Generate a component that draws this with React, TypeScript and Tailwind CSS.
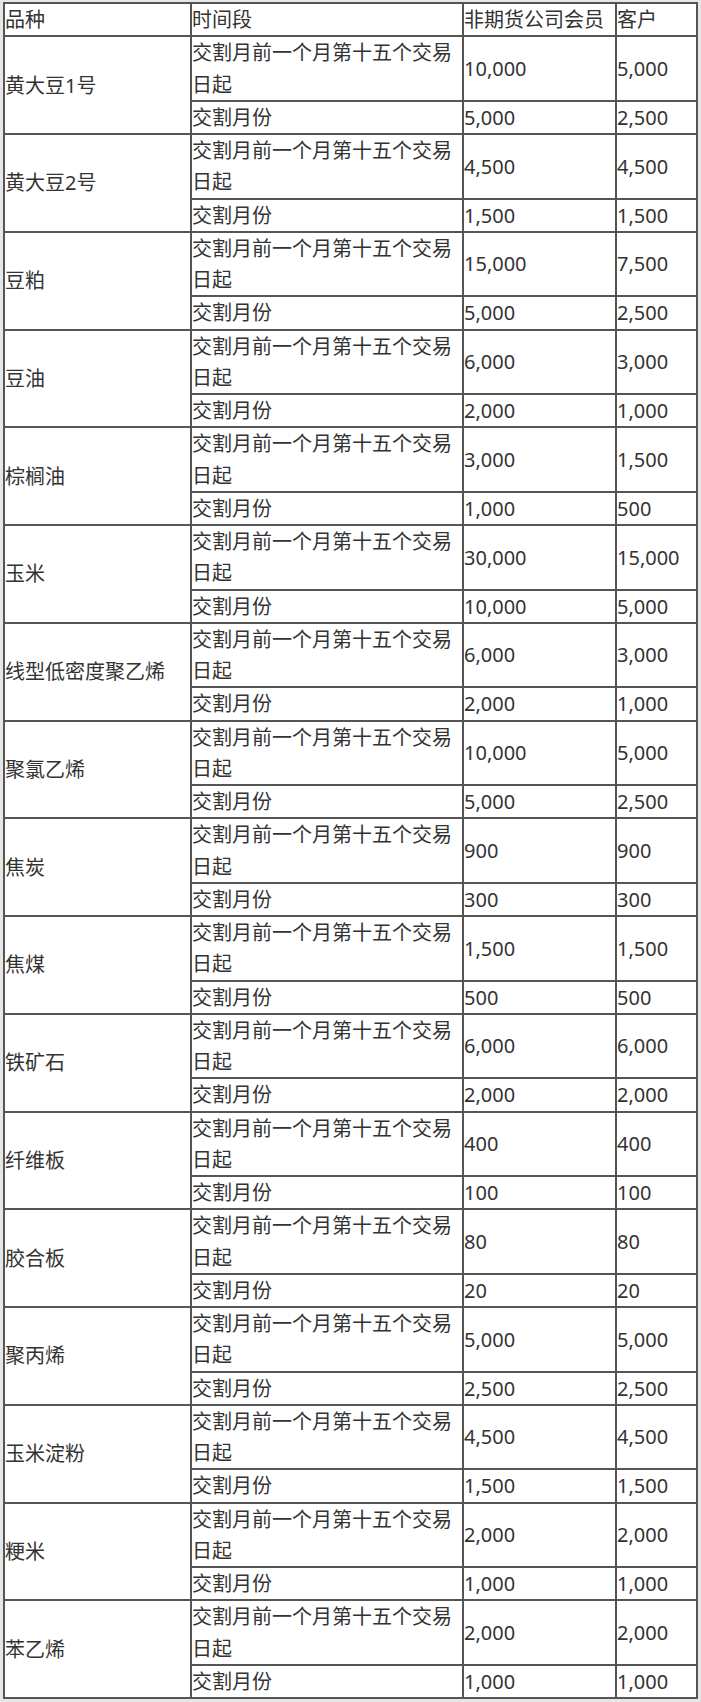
import React from "react";

interface Row {
  name: string;
  before: [string, string];
  month: [string, string];
}

const rows: Row[] = [
  { name: "黄大豆1号", before: ["10,000", "5,000"], month: ["5,000", "2,500"] },
  { name: "黄大豆2号", before: ["4,500", "4,500"], month: ["1,500", "1,500"] },
  { name: "豆粕", before: ["15,000", "7,500"], month: ["5,000", "2,500"] },
  { name: "豆油", before: ["6,000", "3,000"], month: ["2,000", "1,000"] },
  { name: "棕榈油", before: ["3,000", "1,500"], month: ["1,000", "500"] },
  { name: "玉米", before: ["30,000", "15,000"], month: ["10,000", "5,000"] },
  { name: "线型低密度聚乙烯", before: ["6,000", "3,000"], month: ["2,000", "1,000"] },
  { name: "聚氯乙烯", before: ["10,000", "5,000"], month: ["5,000", "2,500"] },
  { name: "焦炭", before: ["900", "900"], month: ["300", "300"] },
  { name: "焦煤", before: ["1,500", "1,500"], month: ["500", "500"] },
  { name: "铁矿石", before: ["6,000", "6,000"], month: ["2,000", "2,000"] },
  { name: "纤维板", before: ["400", "400"], month: ["100", "100"] },
  { name: "胶合板", before: ["80", "80"], month: ["20", "20"] },
  { name: "聚丙烯", before: ["5,000", "5,000"], month: ["2,500", "2,500"] },
  { name: "玉米淀粉", before: ["4,500", "4,500"], month: ["1,500", "1,500"] },
  { name: "粳米", before: ["2,000", "2,000"], month: ["1,000", "1,000"] },
  { name: "苯乙烯", before: ["2,000", "2,000"], month: ["1,000", "1,000"] },
];

const cell = "border border-[#555] p-0 align-middle text-left font-normal";

export default function App() {
  return (
    <div className="bg-[#e6e6e6] pt-[2px] px-[3px] pb-[4px]">
      <table
        className="w-[695px] table-fixed border-separate border-spacing-0 border border-[#555] bg-white text-[20px] leading-[31.25px] text-[#333]"
        style={{ fontFamily: '"Noto Sans", "Noto Sans CJK SC", sans-serif' }}
      >
        <thead>
          <tr>
            <th className={`${cell} w-[187px]`}>品种</th>
            <th className={`${cell} w-[272px]`}>时间段</th>
            <th className={`${cell} w-[153px]`}>非期货公司会员</th>
            <th className={`${cell} w-[81px]`}>客户</th>
          </tr>
        </thead>
        <tbody>
          {rows.map((r) => (
            <React.Fragment key={r.name}>
              <tr>
                <td rowSpan={2} className={cell}>
                  {r.name}
                </td>
                <td className={cell}>交割月前一个月第十五个交易日起</td>
                <td className={cell}>{r.before[0]}</td>
                <td className={cell}>{r.before[1]}</td>
              </tr>
              <tr>
                <td className={cell}>交割月份</td>
                <td className={cell}>{r.month[0]}</td>
                <td className={cell}>{r.month[1]}</td>
              </tr>
            </React.Fragment>
          ))}
        </tbody>
      </table>
    </div>
  );
}
